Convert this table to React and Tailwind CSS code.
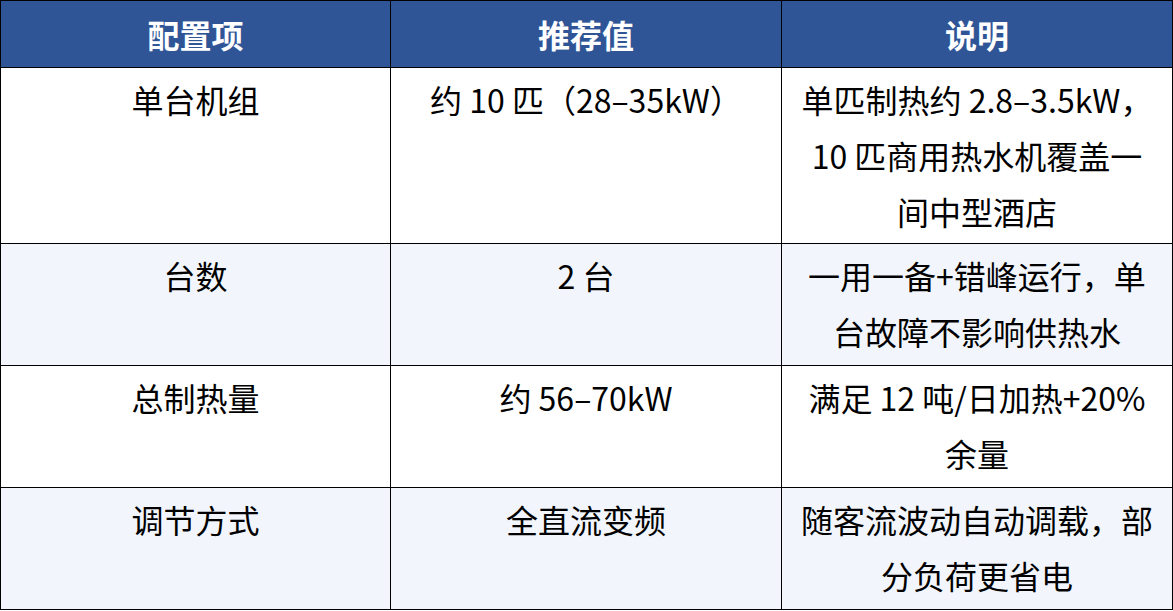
import React from "react";

const rows = [
  { a: "单台机组", b: "约 10 匹（28–35kW）", c: ["单匹制热约 2.8–3.5kW，", "10 匹商用热水机覆盖一", "间中型酒店"], h: "h-[176px]", bg: "bg-white" },
  { a: "台数", b: "2 台", c: ["一用一备+错峰运行，单", "台故障不影响供热水"], h: "h-[122px]", bg: "bg-[#f2f6fc]" },
  { a: "总制热量", b: "约 56–70kW", c: ["满足 12 吨/日加热+20%", "余量"], h: "h-[122px]", bg: "bg-white" },
  { a: "调节方式", b: "全直流变频", c: ["随客流波动自动调载，部", "分负荷更省电"], h: "h-[122px]", bg: "bg-[#f2f6fc]" },
];

export default function App() {
  return (
    <div className="w-[1173px] h-[611px] bg-white" style={{ fontFamily: '"Noto Sans CJK SC", "Microsoft YaHei", sans-serif' }}>
      <table className="w-[1172px] border-collapse table-fixed">
        <colgroup>
          <col className="w-[390px]" />
          <col className="w-[391px]" />
          <col className="w-[391px]" />
        </colgroup>
        <thead>
          <tr className="h-[67px] bg-[#2f5597]">
            {["配置项", "推荐值", "说明"].map((t) => (
              <th key={t} className="border border-black text-white font-bold text-[32px] leading-none text-center align-middle">
                {t}
              </th>
            ))}
          </tr>
        </thead>
        <tbody>
          {rows.map((r) => (
            <tr key={r.a} className={`${r.h} ${r.bg}`}>
              <td className="border border-black text-center align-top pt-[3px] text-[32px] leading-[56px] text-black">{r.a}</td>
              <td className="border border-black text-center align-top pt-[3px] text-[32px] leading-[56px] text-black">{r.b}</td>
              <td className="border border-black text-center align-top pt-[3px] text-[32px] leading-[56px] text-black whitespace-nowrap">
                {r.c.map((l, i) => (
                  <div key={i}>{l}</div>
                ))}
              </td>
            </tr>
          ))}
        </tbody>
      </table>
    </div>
  );
}
